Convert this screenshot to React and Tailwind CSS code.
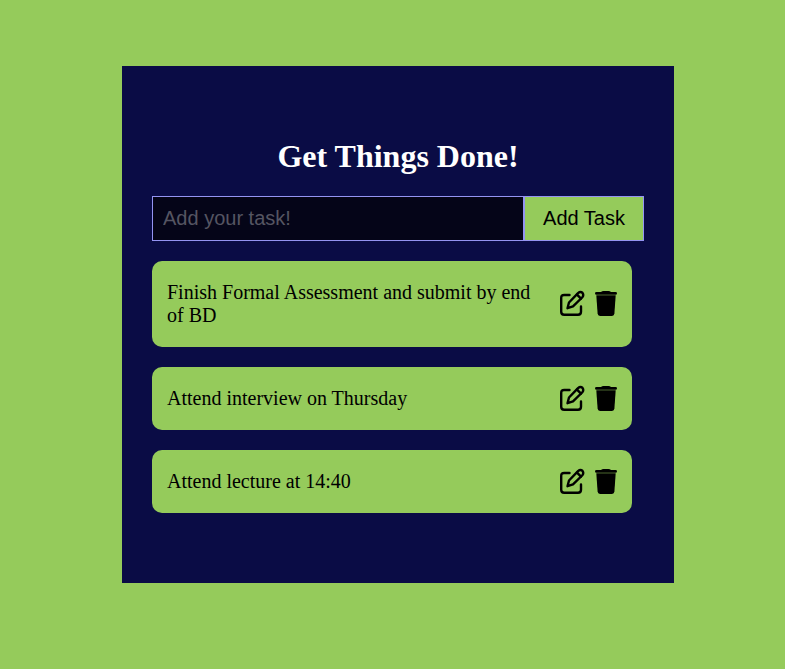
const tasks = [
  "Finish Formal Assessment and submit by end of BD",
  "Attend interview on Thursday",
  "Attend lecture at 14:40",
];

function EditIcon() {
  return (
    <svg viewBox="0 0 26 26" className="h-[26px] w-[26px]" fill="none" stroke="currentColor" strokeWidth="2.4" strokeLinecap="round" strokeLinejoin="round">
      <path d="M10.500 5H5.200Q2.200 5 2.200 8V21.800Q2.200 24.800 5.200 24.800H19Q22 24.800 22 21.800V16.500" />
      <path d="M8.500 18.200L10 12.500L19 3.200Q21.400 1.200 23.400 2.800Q25.200 5 23.100 7.500L14 16.400Z" />
      <path d="M18 4.600L22 8.600" />
    </svg>
  );
}

function TrashIcon() {
  return (
    <svg viewBox="0 0 22 26" className="h-[26px] w-[22px]" fill="currentColor">
      <path d="M1.500 2H6Q7 .9 8.500 .9H13.500Q15 .9 16 2H20.500Q22 2 22 3.300Q22 4.800 20.500 4.800H1.500Q0 4.800 0 3.300Q0 2 1.500 2Z" />
      <path d="M1.300 5.300H20.700L19.400 23.500Q19.200 25.900 17 25.900H5Q2.800 25.900 2.600 23.500Z" />
    </svg>
  );
}

export default function App() {
  return (
    <main className="flex min-h-screen flex-col bg-[#95cb5b] pt-[66px] pl-[122px]">
      <section className="h-[517px] w-[552px] bg-[#0a0c45] px-[30px] pt-[72px]">
        <h1 className="h-[37px] text-center font-['Liberation_Serif',serif] text-[32px] leading-[37px] font-bold text-white">
          Get Things Done!
        </h1>
        <form className="mt-[21px] flex h-[45px] w-[492px] font-['Liberation_Sans',sans-serif] text-[20px]">
          <input
            placeholder="Add your task!"
            className="w-[372px] border border-[#9494f2] bg-[#050518] px-[10px] pb-[2px] text-white outline-none placeholder:text-[#555562]"
          />
          <button type="button" className="w-[120px] border border-[#9494f2] bg-[#95cb5b] pb-[2px] text-black">
            Add Task
          </button>
        </form>
        <ul className="mt-5 flex w-[480px] flex-col gap-5 font-['Liberation_Serif',serif] text-[20px] leading-[23px]">
          {tasks.map((task) => (
            <li key={task} className="flex items-center justify-between rounded-[10px] bg-[#95cb5b] px-[15px] py-5">
              <p className="w-[377px]">{task}</p>
              <div className="-mt-[10px] -mb-2 flex gap-[10px]">
                <EditIcon />
                <TrashIcon />
              </div>
            </li>
          ))}
        </ul>
      </section>
    </main>
  );
}
